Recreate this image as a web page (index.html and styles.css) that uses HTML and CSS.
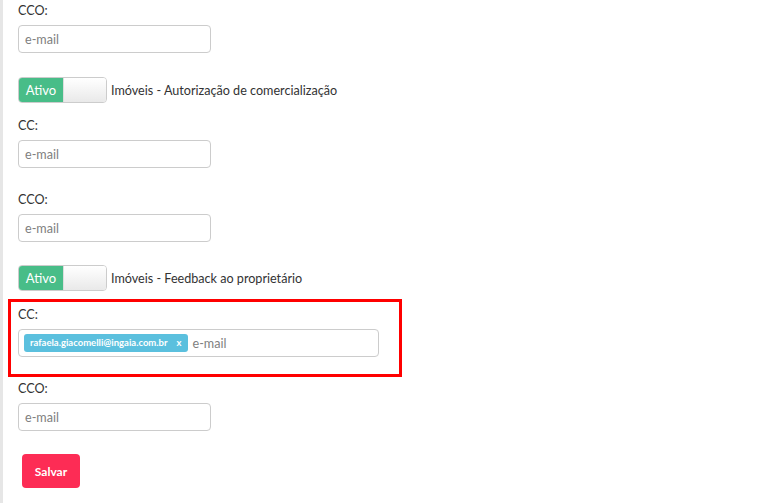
FILE: index.html
```html
<!DOCTYPE html>
<html lang="pt-BR">
<head>
<meta charset="utf-8">
<link rel="stylesheet" href="styles.css">
</head>
<body>
<div class="page">
  <div class="group">
    <label class="lbl">CCO:</label>
    <input class="field" type="text" placeholder="e-mail">
  </div>

  <div class="switch-row">
    <div class="switch"><span class="on">Ativo</span><span class="knob"></span></div>
    <span class="switch-label">Imóveis - Autorização de comercialização</span>
  </div>

  <div class="group after-switch">
    <label class="lbl">CC:</label>
    <input class="field" type="text" placeholder="e-mail">
  </div>

  <div class="group gap">
    <label class="lbl">CCO:</label>
    <input class="field" type="text" placeholder="e-mail">
  </div>

  <div class="switch-row second">
    <div class="switch"><span class="on">Ativo</span><span class="knob"></span></div>
    <span class="switch-label">Imóveis - Feedback ao proprietário</span>
  </div>

  <div class="highlight">
    <div class="group">
      <label class="lbl">CC:</label>
      <div class="tags">
        <span class="tag">rafaela.giacomelli@ingaia.com.br<span class="rm">x</span></span>
        <span class="ph">e-mail</span>
      </div>
    </div>
  </div>

  <div class="group after-box">
    <label class="lbl">CCO:</label>
    <input class="field" type="text" placeholder="e-mail">
  </div>

  <button class="save">Salvar</button>
</div>
</body>
</html>
```

FILE: styles.css
```css
html, body {
  margin: 0;
  padding: 0;
  background: #fff;
}
body {
  font-family: Lato, "Open Sans", sans-serif;
  font-size: 12.6px;
  color: #333;
}
.page {
  border-left: 3px solid #e6e6e6;
  min-height: 503px;
  box-sizing: border-box;
  padding: 2px 0 0 15px;
}
.group {
  display: flex;
  flex-direction: column;
  align-items: flex-start;
}
.lbl {
  font-size: 12.6px;
  line-height: 18px;
  margin-bottom: 5px;
  color: #333;
}
.field {
  width: 193px;
  height: 28px;
  box-sizing: border-box;
  border: 1px solid #ccc;
  border-radius: 4px;
  padding: 0 6px;
  font-family: Lato, sans-serif;
  font-size: 12.6px;
  color: #555;
  outline: none;
}
.field::placeholder { color: #808080; }
.switch-row {
  display: flex;
  align-items: center;
  margin-top: 24px;
}
.switch-row.second { margin-top: 23px; }
.switch {
  display: flex;
  width: 89px;
  height: 26px;
  box-sizing: border-box;
  border: 1px solid #ccc;
  border-radius: 4px;
  overflow: hidden;
}
.switch .on {
  width: 44px;
  background: #48bd88;
  color: #fff;
  font-size: 13px;
  display: flex;
  align-items: center;
  justify-content: center;
  border-right: 1px solid #ddd;
}
.switch .knob {
  flex: 1;
  background: linear-gradient(#fff, #e9e9e9);
}
.switch-label {
  margin-left: 4px;
  font-size: 12.6px;
}
.after-switch { margin-top: 14px; }
.gap { margin-top: 23px; }
.highlight {
  margin: 8px 0 0 -10px;
  width: 394px;
  box-sizing: border-box;
  border: 3px solid #f00;
  padding: 4px 0 17px 7px;
}
.tags {
  width: 361px;
  height: 28px;
  box-sizing: border-box;
  border: 1px solid #ccc;
  border-radius: 4px;
  display: flex;
  align-items: center;
  padding: 0 5px;
}
.tag {
  background: #5bc0de;
  color: #fff;
  font-weight: bold;
  font-size: 9.5px;
  height: 18px;
  line-height: 18px;
  padding: 0 6px;
  border-radius: 3px;
  display: inline-flex;
}
.tag .rm { margin-left: 9px; }
.ph {
  margin-left: 5px;
  color: #808080;
  font-size: 12.6px;
}
.after-box { margin-top: 3px; }
.save {
  margin: 23px 0 0 4px;
  width: 58px;
  height: 34px;
  border: none;
  border-radius: 4px;
  background: #fd2c55;
  color: #fff;
  font-family: Lato, sans-serif;
  font-weight: bold;
  font-size: 12px;
}
```
